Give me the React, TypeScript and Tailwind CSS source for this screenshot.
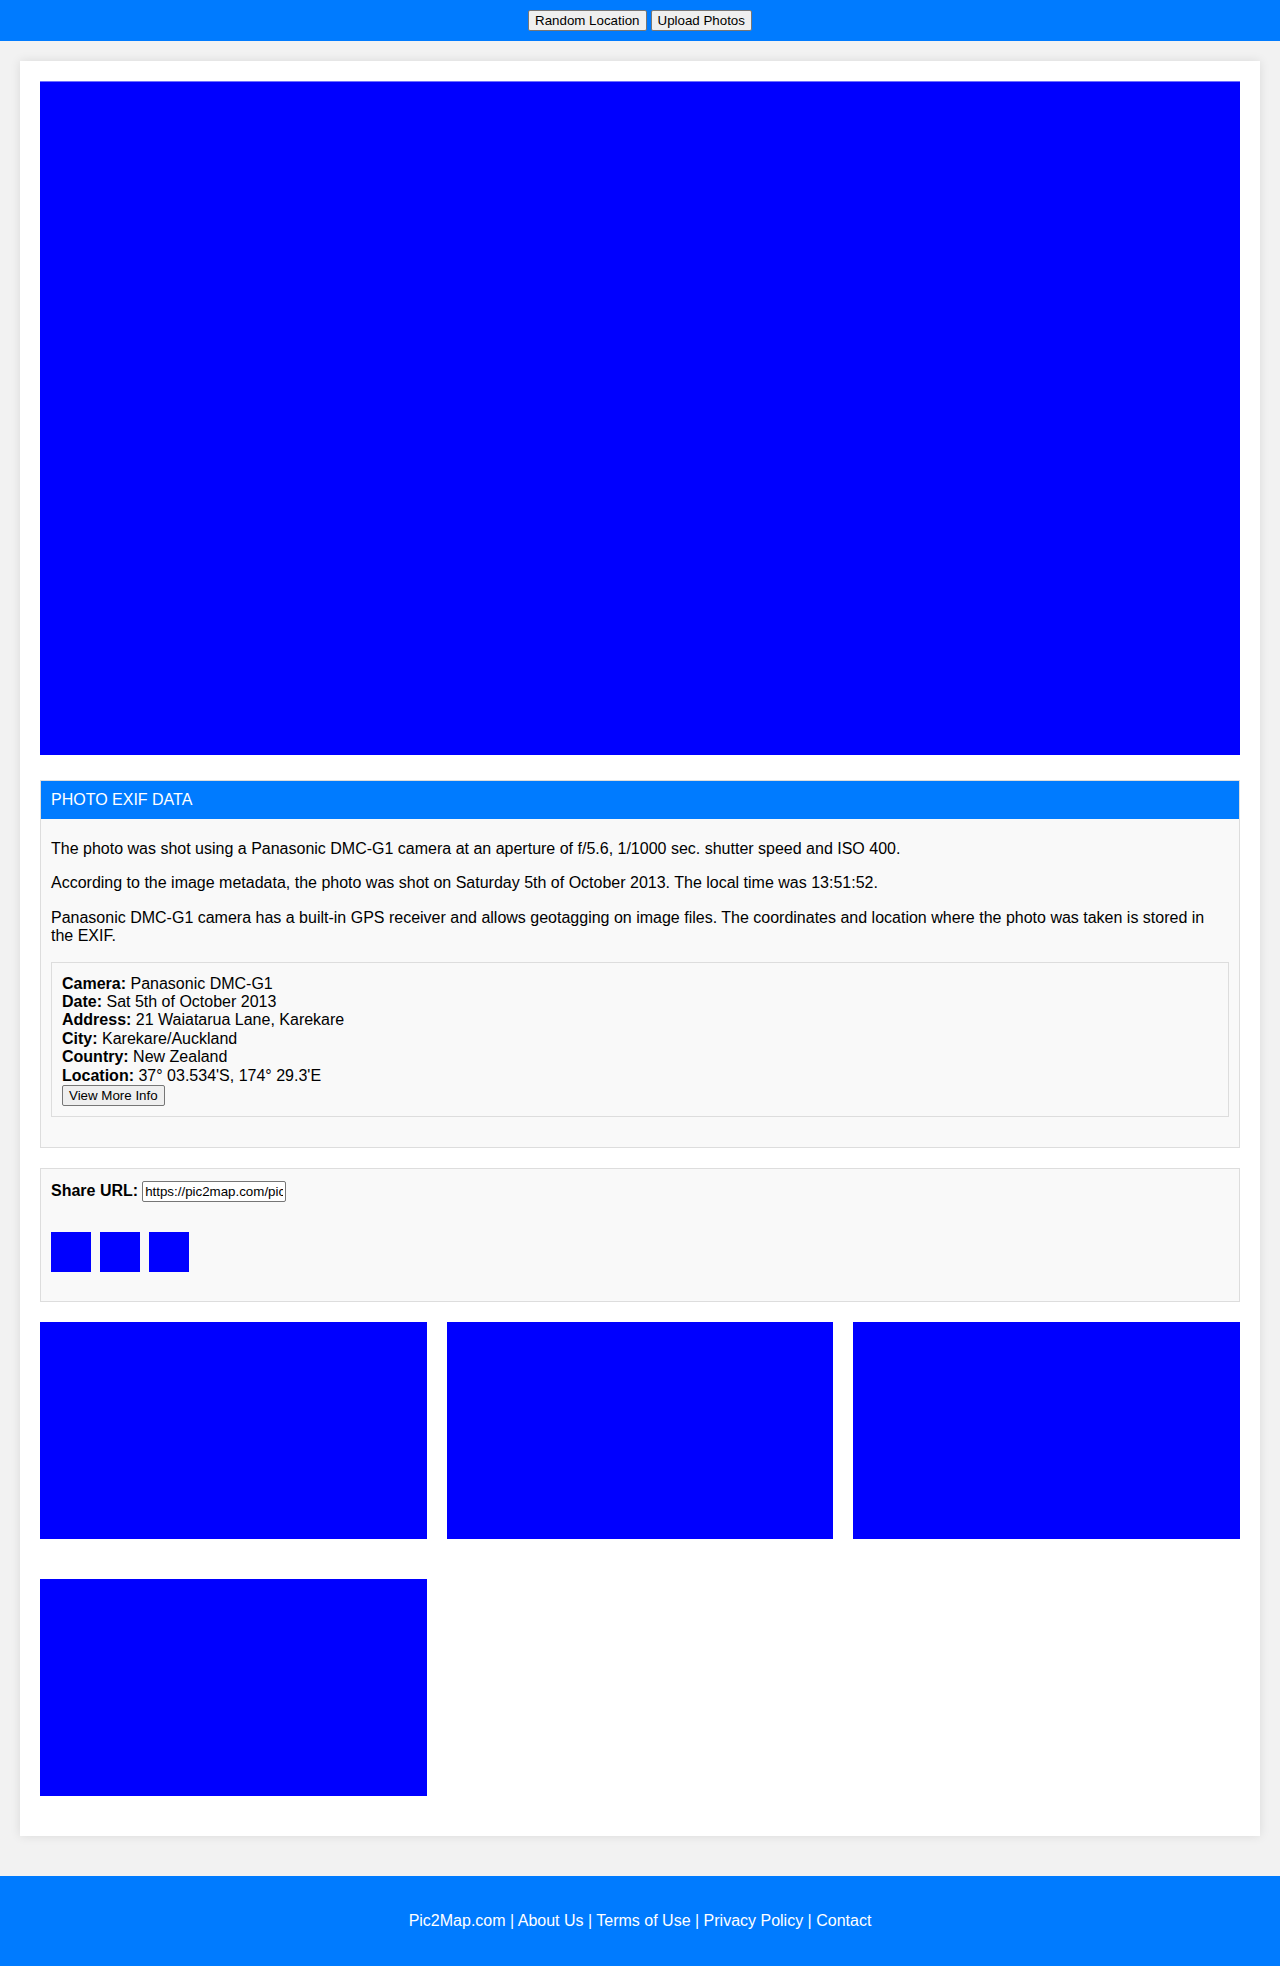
import React from "react";

const font = "font-['Liberation_Sans',Arial,Helvetica,sans-serif]";

export default function App() {
  return (
    <div className={`min-h-[1966px] bg-[#f2f2f2] text-black ${font} flex flex-col`}>
      <header className="bg-[#007bff] h-[41px] flex items-center justify-center gap-[4px]">
        <button className="h-[21px] px-[6px] bg-[#efefef] border border-[#767676] rounded-[2px] text-[13.33px] leading-none text-black">
          Random Location
        </button>
        <button className="h-[21px] px-[6px] bg-[#efefef] border border-[#767676] rounded-[2px] text-[13.33px] leading-none text-black">
          Upload Photos
        </button>
      </header>

      <main className="mx-[20px] mt-[20px] bg-white p-[20px] pb-[20px] shadow-[0_0_10px_rgba(0,0,0,0.1)]">
        <div className="w-full h-[674px] bg-[#0000ff] border-t border-[#6f6fff]" />

        <section className="mt-[25px] border border-[#dddddd] bg-[#f9f9f9]">
          <div className="bg-[#007bff] text-white text-[16px] leading-[18px] px-[10px] py-[10px]">
            PHOTO EXIF DATA
          </div>
          <div className="px-[10px] pt-[21px] pb-[30px] text-[16px] leading-[18.4px]">
            <p>
              The photo was shot using a Panasonic DMC-G1 camera at an aperture of f/5.6, 1/1000 sec. shutter speed and ISO 400.
            </p>
            <p className="mt-[16px]">
              According to the image metadata, the photo was shot on Saturday 5th of October 2013. The local time was 13:51:52.
            </p>
            <p className="mt-[16px]">
              Panasonic DMC-G1 camera has a built-in GPS receiver and allows geotagging on image files. The coordinates and location where the photo was taken is stored in the EXIF.
            </p>
            <div className="mt-[16px] border border-[#dddddd] bg-[#f9f9f9] px-[10px] pt-[12px] pb-[10px]">
              <div><b>Camera:</b> Panasonic DMC-G1</div>
              <div><b>Date:</b> Sat 5th of October 2013</div>
              <div><b>Address:</b> 21 Waiatarua Lane, Karekare</div>
              <div><b>City:</b> Karekare/Auckland</div>
              <div><b>Country:</b> New Zealand</div>
              <div><b>Location:</b> 37° 03.534'S, 174° 29.3'E</div>
              <button className="h-[21px] px-[6px] bg-[#efefef] border border-[#767676] rounded-[2px] text-[13.33px] leading-none text-black">
                View More Info
              </button>
            </div>
          </div>
        </section>

        <section className="mt-[20px] border border-[#dddddd] bg-[#f9f9f9] px-[10px] pt-[10px] pb-[29px]">
          <div className="flex items-center gap-[4px] text-[16px]">
            <b>Share URL:</b>
            <input
              readOnly
              value="https://pic2map.com/pic"
              className="w-[144px] h-[21px] border border-[#767676] rounded-[2px] bg-white px-[2px] text-[13.33px] text-black outline-none"
            />
          </div>
          <div className="mt-[29px] flex gap-[9px]">
            <div className="w-[40px] h-[40px] bg-[#0000ff]" />
            <div className="w-[40px] h-[40px] bg-[#0000ff]" />
            <div className="w-[40px] h-[40px] bg-[#0000ff]" />
          </div>
        </section>

        <div className="mt-[20px] grid grid-cols-3 gap-x-[20px]">
          {[0, 1, 2, 3].map((i) => (
            <div key={i} className="h-[217px] mb-[20px] bg-[#0000ff] [&:nth-child(n+4)]:mt-[20px]" />
          ))}
        </div>
      </main>

      <footer className="mt-[40px] bg-[#007bff] text-white text-[16px] h-[90px] flex items-center justify-center">
        <p>Pic2Map.com | About Us | Terms of Use | Privacy Policy | Contact</p>
      </footer>
    </div>
  );
}
